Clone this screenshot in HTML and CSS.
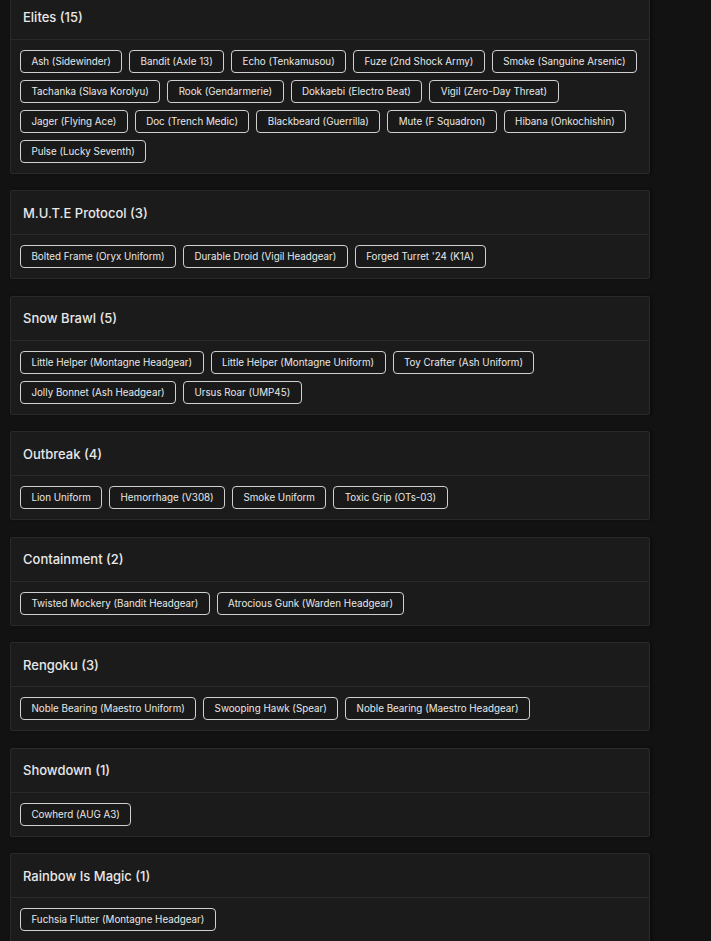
FILE: index.html
```html
<!DOCTYPE html>
<html lang="en">
<head>
<meta charset="utf-8">
<title>Collections</title>
<link rel="stylesheet" href="styles.css">
</head>
<body>
<main class="list">
  <section class="card">
    <h2 class="card-title">Elites (15)</h2>
    <div class="chips">
      <span class="chip">Ash (Sidewinder)</span>
      <span class="chip">Bandit (Axle 13)</span>
      <span class="chip">Echo (Tenkamusou)</span>
      <span class="chip">Fuze (2nd Shock Army)</span>
      <span class="chip">Smoke (Sanguine Arsenic)</span>
      <span class="chip">Tachanka (Slava Korolyu)</span>
      <span class="chip">Rook (Gendarmerie)</span>
      <span class="chip">Dokkaebi (Electro Beat)</span>
      <span class="chip">Vigil (Zero-Day Threat)</span>
      <span class="chip">Jager (Flying Ace)</span>
      <span class="chip">Doc (Trench Medic)</span>
      <span class="chip">Blackbeard (Guerrilla)</span>
      <span class="chip">Mute (F Squadron)</span>
      <span class="chip">Hibana (Onkochishin)</span>
      <span class="chip">Pulse (Lucky Seventh)</span>
    </div>
  </section>
  <section class="card">
    <h2 class="card-title">M.U.T.E Protocol (3)</h2>
    <div class="chips">
      <span class="chip">Bolted Frame (Oryx Uniform)</span>
      <span class="chip">Durable Droid (Vigil Headgear)</span>
      <span class="chip">Forged Turret '24 (K1A)</span>
    </div>
  </section>
  <section class="card">
    <h2 class="card-title">Snow Brawl (5)</h2>
    <div class="chips">
      <span class="chip">Little Helper (Montagne Headgear)</span>
      <span class="chip">Little Helper (Montagne Uniform)</span>
      <span class="chip">Toy Crafter (Ash Uniform)</span>
      <span class="chip">Jolly Bonnet (Ash Headgear)</span>
      <span class="chip">Ursus Roar (UMP45)</span>
    </div>
  </section>
  <section class="card">
    <h2 class="card-title">Outbreak (4)</h2>
    <div class="chips">
      <span class="chip">Lion Uniform</span>
      <span class="chip">Hemorrhage (V308)</span>
      <span class="chip">Smoke Uniform</span>
      <span class="chip">Toxic Grip (OTs-03)</span>
    </div>
  </section>
  <section class="card">
    <h2 class="card-title">Containment (2)</h2>
    <div class="chips">
      <span class="chip">Twisted Mockery (Bandit Headgear)</span>
      <span class="chip">Atrocious Gunk (Warden Headgear)</span>
    </div>
  </section>
  <section class="card">
    <h2 class="card-title">Rengoku (3)</h2>
    <div class="chips">
      <span class="chip">Noble Bearing (Maestro Uniform)</span>
      <span class="chip">Swooping Hawk (Spear)</span>
      <span class="chip">Noble Bearing (Maestro Headgear)</span>
    </div>
  </section>
  <section class="card">
    <h2 class="card-title">Showdown (1)</h2>
    <div class="chips">
      <span class="chip">Cowherd (AUG A3)</span>
    </div>
  </section>
  <section class="card">
    <h2 class="card-title">Rainbow Is Magic (1)</h2>
    <div class="chips">
      <span class="chip">Fuchsia Flutter (Montagne Headgear)</span>
    </div>
  </section>
</main>
</body>
</html>
```

FILE: styles.css
```css
html, body {
  margin: 0;
  padding: 0;
  background: #121212;
}

body {
  font-family: Inter, "Open Sans", "Liberation Sans", sans-serif;
  color: #e4e4e4;
  overflow: hidden;
}

.list {
  display: flex;
  flex-direction: column;
  gap: 16.5px;
  width: 640px;
  margin: -5.5px 0 0 10px;
}

.card {
  background: #1b1b1b;
  border: 1px solid #2a2a2a;
  border-radius: 2px;
  box-shadow: 2px 0 3px rgba(0, 0, 0, 0.35);
}

.card-title {
  margin: 0;
  height: 43px;
  display: flex;
  align-items: center;
  padding: 0 12px;
  font-size: 13px;
  font-weight: 500;
  color: #e8e8e8;
  border-bottom: 1px solid #2a2a2a;
}

.chips {
  display: flex;
  flex-wrap: wrap;
  gap: 7px;
  padding: 10px 9px;
}

.chip {
  display: inline-flex;
  align-items: center;
  box-sizing: border-box;
  height: 23px;
  padding: 0 10.4px;
  border: 1px solid #d0d0d0;
  border-radius: 4px;
  background: #191919;
  font-size: 9.8px;
  color: #e8e8e8;
  white-space: nowrap;
}
```
